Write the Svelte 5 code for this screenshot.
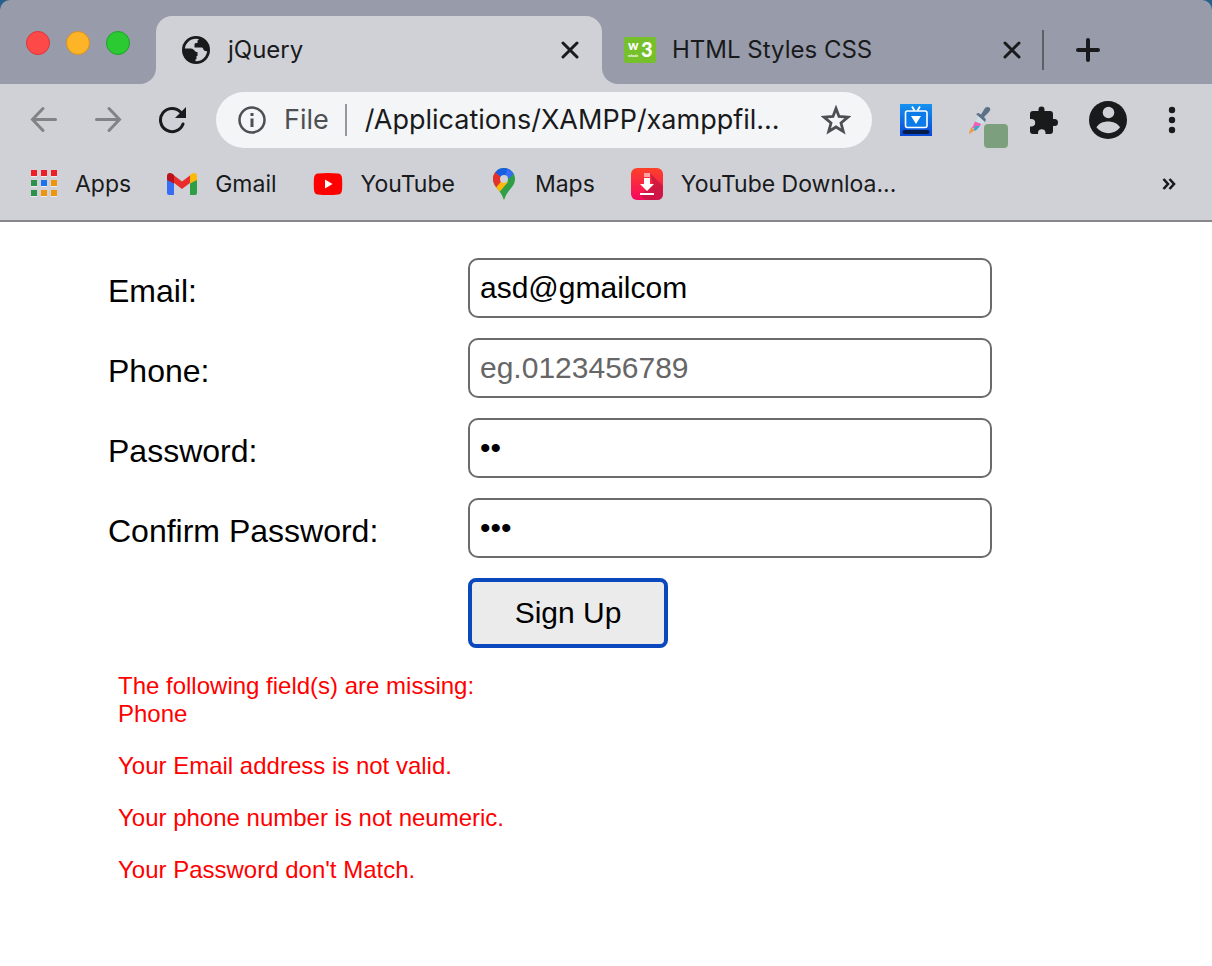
<script>
  let email = $state('asd@gmailcom');
  let phone = $state('');
  let password = $state('ab');
  let confirm = $state('abc');
  const messages = [
    'Your Email address is not valid.',
    'Your phone number is not neumeric.',
    "Your Password don't Match."
  ];
</script>

<div class="window">
  <header>
    <div class="tabs">
      <div class="lights">
        <button class="light red" aria-label="Close window"></button>
        <button class="light amber" aria-label="Minimise window"></button>
        <button class="light green" aria-label="Zoom window"></button>
      </div>
      <div class="tab-back">
        <div class="tab">
          <svg width="28" height="28" viewBox="0 0 28 28">
            <circle cx="14" cy="14" r="12.6" fill="none" stroke="#191a1c" stroke-width="2.800" />
            <path d="M1.500 12.500H9Q11 12.500 12.500 14.500L14 16H15.500V20H14.500V22.500Q14.500 23.500 13.500 23.500V26.500L9 26Q2 22 1.500 12.500ZM17 1.500L22 4 26 10V15Q24 15.500 22 14.500L21 12.500Q21 11.500 19.500 11.500H12.500V8.500Q12.500 7 14 7H15.500V5Q15.500 4 16.500 4Z" fill="#191a1c" />
          </svg>
          <span class="title">jQuery</span>
          <button class="plain" aria-label="Close tab">
            <svg width="18" height="18" viewBox="0 0 18 18"><path d="M2 2 16 16M16 2 2 16" stroke="#191a1c" stroke-width="3" stroke-linecap="round" /></svg>
          </button>
        </div>
      </div>
      <div class="rest">
        <div class="tab second">
          <svg width="32" height="26" viewBox="0 0 32 26">
            <rect width="32" height="26" rx="2" fill="#76c02c" />
            <g fill="#fff" font-family="Lato, sans-serif" font-weight="900">
              <text x="4" y="13" font-size="13">w</text>
              <text x="17" y="20" font-size="20">3</text>
              <text x="4" y="20" font-size="3">schools</text>
            </g>
          </svg>
          <span class="title">HTML Styles CSS</span>
          <button class="plain" aria-label="Close tab">
            <svg width="18" height="18" viewBox="0 0 18 18"><path d="M2 2 16 16M16 2 2 16" stroke="#191a1c" stroke-width="3" stroke-linecap="round" /></svg>
          </button>
        </div>
        <span class="rule"></span>
        <button class="plain" aria-label="New tab">
          <svg width="24" height="24" viewBox="0 0 24 24"><path d="M2 12H22M12 2V22" stroke="#191a1c" stroke-width="4" stroke-linecap="round" /></svg>
        </button>
      </div>
    </div>

    <div class="toolbar">
      <nav>
        <button class="plain" aria-label="Back">
          <svg width="28" height="28" viewBox="0 0 28 28" fill="none" stroke="#828386" stroke-width="3" stroke-linecap="round"><path d="M25.500 13.500H3M13 2.500 2.500 13.500 13 24.500" /></svg>
        </button>
        <button class="plain" aria-label="Forward">
          <svg width="28" height="28" viewBox="0 0 28 28" fill="none" stroke="#828386" stroke-width="3" stroke-linecap="round"><path d="M2.500 13.500H25.500M15 2.500 25.500 13.500 15 24.500" /></svg>
        </button>
        <button class="plain" aria-label="Reload">
          <svg width="28" height="28" viewBox="0 0 28 28"><path d="M25 18A11.600 11.600 0 1 1 22.500 6" fill="none" stroke="#191a1c" stroke-width="3" stroke-linecap="round" /><path d="M28 1V12H17Z" fill="#191a1c" /></svg>
        </button>
      </nav>
      <div class="address">
        <svg width="28" height="28" viewBox="0 0 28 28"><circle cx="14" cy="14" r="12.500" fill="none" stroke="#4e4f52" stroke-width="2.500" /><path d="M14 12.500V21M14 7V10" stroke="#4e4f52" stroke-width="3" /></svg>
        <span class="scheme">File</span>
        <input class="url" aria-label="Address" value="/Applications/XAMPP/xamppfil..." />
        <button class="plain" aria-label="Bookmark this page">
          <svg width="30" height="30" viewBox="0 0 30 30"><path d="M15 3.500 18 11.500 27 12.200 20 18 22.300 26.500 15 22 7.700 26.500 10 18 3 12.200 12 11.500Z" fill="none" stroke="#4e4f52" stroke-width="2.800" /></svg>
        </button>
      </div>
      <div class="actions">
        <button class="plain" aria-label="Video downloader">
          <svg width="32" height="32" viewBox="0 0 32 32">
            <defs><linearGradient id="tv" x2="0" y2="1"><stop stop-color="#1592f0" /><stop offset="1" stop-color="#0948d7" /></linearGradient></defs>
            <path d="M0 0H32V32H0Z" fill="url(#tv)" />
            <path d="M12 2.500 14.500 6.500M20 2.500 17.500 6.500" stroke="#fff" stroke-width="1.800" />
            <rect x="5.500" y="7" width="21.500" height="16.500" rx="2" fill="#0c7bea" stroke="#fff" stroke-width="1.600" />
            <path d="M11 12H21L16 20Z" fill="#fff" />
            <rect x="2.500" y="26" width="27" height="4" rx="2" fill="#071c48" />
          </svg>
        </button>
        <button class="plain" aria-label="Colour picker">
          <svg width="40" height="44" viewBox="0 0 40 44">
            <path d="M11.500 11.500 17 17 8 26.500 1.500 29.500 4 22Z" fill="#cfdfe8" />
            <path d="M7 17.500 13.500 20 9 25 4 24Z" fill="#ee62b3" /><path d="M7.500 22 12 22 8 26.500 5 27Z" fill="#35a9d2" /><path d="M3.500 23 6.500 26.500 1.500 30 1 28.500Z" fill="#f09a45" />
            <path d="M8 10 10.500 9 13 10.500 17 4Q19.500 2 22 4Q23 6.500 21 8L16 13 18 15.500 17 18Z" fill="#5b7188" />
            <rect x="16" y="20" width="24" height="24" rx="4" fill="#7ca07d" />
          </svg>
        </button>
        <button class="plain" aria-label="Extensions">
          <svg width="28" height="28" viewBox="0 0 28 28"><path d="M3 5H8.500V3.500A3 3 0 0 1 14.500 3.500V5H20Q23 5 23 8V13H24.500A3.500 3.500 0 0 1 24.500 20H23V25Q23 28 20 28H15.500V26.500A3.800 3.800 0 0 0 8 26.500V28H3Q0 28 0 25V20.500H2A3.800 3.800 0 0 0 2 13H0V8Q0 5 3 5Z" fill="#191a1c" /></svg>
        </button>
        <button class="plain" aria-label="Profile">
          <svg width="38" height="38" viewBox="0 0 38 38"><circle cx="19" cy="19" r="19" fill="#191a1c" /><circle cx="19.500" cy="11.500" r="5.800" fill="#d0d1d6" /><path d="M7.500 26.500C11 18.500 27 18.500 31 26.500C25 34 14 34 7.500 26.500Z" fill="#d0d1d6" /></svg>
        </button>
        <button class="plain" aria-label="Menu">
          <svg width="8" height="28" viewBox="0 0 8 28" fill="#191a1c"><circle cx="4" cy="4" r="3.200" /><circle cx="4" cy="14" r="3.200" /><circle cx="4" cy="24" r="3.200" /></svg>
        </button>
      </div>
    </div>

    <nav class="bookmarks">
      <a href="#apps">
        <svg width="26" height="28" viewBox="0 0 26 28">
          <path d="M0 6.500H6M10 6.500H16M20 6.500H26M0 16.500H6M10 16.500H16M20 16.500H26M0 26.500H6M10 26.500H16M20 26.500H26" stroke="#ececef" />
          <path d="M0 0H6V6H0ZM10 0H16V6H10ZM20 0H26V6H20Z" fill="#ef1d25" />
          <path d="M0 10H6V16H0ZM0 20H6V26H0Z" fill="#2b924b" />
          <path d="M10 10H16V16H10Z" fill="#1b73ee" />
          <path d="M20 10H26V16H20ZM10 20H16V26H10ZM20 20H26V26H20Z" fill="#ee9509" />
        </svg>
        Apps
      </a>
      <a href="#gmail">
        <svg width="30" height="22" viewBox="0 0 30 22">
          <path d="M0 5 7 9V22H2Q0 22 0 20Z" fill="#376df2" /><path d="M23 9 30 5V20Q30 22 28 22H23Z" fill="#2e9e47" />
          <path d="M6.500 2 15 8.500 23.500 2V9.500L15 16 6.500 9.500Z" fill="#e92d2a" />
          <path d="M0 7V3Q0 0 3 0Q5 0 7 2V10.500Z" fill="#b9121b" /><path d="M30 7V3Q30 0 27 0Q25 0 23 2V10.500Z" fill="#fcb90b" />
        </svg>
        Gmail
      </a>
      <a href="#youtube">
        <svg width="30" height="22" viewBox="0 0 30 22"><path d="M5 .5Q15 -.5 25 .5Q28.500 .5 29 5Q29.500 11 29 17Q28.500 21.500 25 21.500Q15 22.500 5 21.500Q1.500 21.500 1 17Q.5 11 1 5Q1.500 .5 5 .5Z" fill="#fe0000" /><path d="M12 6.500V15.500L19.500 11Z" fill="#fff" /></svg>
        YouTube
      </a>
      <a href="#maps">
        <svg width="26" height="32" viewBox="0 0 26 32">
          <defs><clipPath id="pin"><path d="M13 0A11 11 0 0 1 24 11C24 19 16 22 13.500 31Q13 32 12.500 31C10 22 2 19 2 11A11 11 0 0 1 13 0Z" /></clipPath></defs>
          <g clip-path="url(#pin)">
            <path d="M0 0H26V32H0Z" fill="#2e9e47" /><path d="M1 20 13 10 17 14 6 27Z" fill="#fcb90b" /><path d="M0 0 13 10 3 22H0Z" fill="#e4312b" /><path d="M4 4 12 11 21 0H4Z" fill="#195de0" /><path d="M17 0 13 10 15 13 26 3V0Z" fill="#376df2" />
          </g>
          <circle cx="13" cy="11" r="4" fill="#d0d1d6" />
        </svg>
        Maps
      </a>
      <a href="#downloader">
        <svg width="32" height="32" viewBox="0 0 32 32">
          <defs><linearGradient id="dl" x2="0" y2="1"><stop stop-color="#fd4229" /><stop offset="1" stop-color="#f70760" /></linearGradient></defs>
          <rect width="32" height="32" rx="6" fill="url(#dl)" />
          <path d="M19 5 32 18V26Q32 32 26 32H14L9 27 22 17Z" fill="#bd173e" opacity=".7" />
          <path d="M13 10H19V16H23L16 23 9 16H13ZM9 25H23V27H9Z" fill="#fff" /><path d="M13 5H19V9H13Z" fill="#fff" opacity=".55" />
        </svg>
        YouTube Downloa...
      </a>
      <button class="plain more" aria-label="More bookmarks">
        <svg width="14" height="12" viewBox="0 0 14 12" fill="none" stroke="#191a1c" stroke-width="2.600"><path d="M1.500 1 6 6 1.500 11M7.500 1 12 6 7.500 11" /></svg>
      </button>
    </nav>
  </header>

  <main>
    <form onsubmit={(e) => e.preventDefault()}>
      <label for="email">Email:</label>
      <input id="email" type="text" bind:value={email} />
      <label for="phone">Phone:</label>
      <input id="phone" type="text" placeholder="eg.0123456789" bind:value={phone} />
      <label for="password">Password:</label>
      <input id="password" type="password" bind:value={password} />
      <label for="confirm">Confirm Password:</label>
      <input id="confirm" type="password" bind:value={confirm} />
      <button class="submit" type="submit">Sign Up</button>
    </form>
    <div class="errors">
      <p>The following field(s) are missing:<br />Phone</p>
      {#each messages as message}
        <p>{message}</p>
      {/each}
    </div>
  </main>
</div>

<style>
  :global(body) { margin: 0; background: #fff; }
  .window { font-family: "Liberation Sans", Arial, sans-serif; color: #000; }
  * { box-sizing: border-box; }
  svg { display: block; flex: none; }
  header {
    background: #d0d1d6;
    border-bottom: 2px solid #87878c;
    font-family: Inter, sans-serif;
    color: #191a1c;
  }
  .plain { border: 0; padding: 0; background: none; display: block; flex: none; }
  .tabs {
    display: flex;
    height: 84px;
    background: linear-gradient(#28608c 16px, #d0d1d6 16px);
  }
  .lights {
    display: flex;
    gap: 16px;
    width: 156px;
    padding: 31px 26px;
    background: #989ba9;
    border-radius: 10px 0 16px 0;
  }
  .light { width: 24px; height: 24px; padding: 0; border-radius: 50%; border: 1px solid; }
  .red { background: #fd4a48; border-color: #dc3538; }
  .amber { background: #fdb427; border-color: #da9020; }
  .green { background: #2bc932; border-color: #1da326; }
  .tab-back { width: 446px; background: #989ba9; padding-top: 16px; }
  .tab { display: flex; align-items: center; height: 68px; padding: 0 23px 0 26px; background: #d0d1d6; border-radius: 16px 16px 0 0; }
  .title { flex: 1; margin-left: 18px; font-size: 24px; line-height: 32px; white-space: nowrap; }
  .rest { display: flex; flex: 1; align-items: center; padding-top: 16px; background: #989ba9; border-radius: 0 10px 0 16px; }
  .second { width: 440px; padding: 0 21px 0 22px; background: none; }
  .second .title { margin-left: 16px; }
  .rule { width: 2px; height: 40px; margin-right: 32px; background: #5d5f68; }
  .toolbar { display: flex; align-items: center; height: 72px; padding-right: 36px; }
  .toolbar nav { display: flex; gap: 36px; padding: 0 30px; }
  .address { display: flex; flex: 1; align-items: center; min-width: 0; height: 56px; padding: 0 21px 0 22px; border-radius: 28px; background: #f4f5f7; font-size: 27px; }
  .scheme { margin-left: 18px; padding-right: 16px; border-right: 2px solid #97989b; line-height: 32px; color: #4e4f52; }
  .url { flex: 1; min-width: 0; height: 40px; padding: 0 0 0 18px; border: 0; background: none; font: 27px/40px Inter, sans-serif; color: #191a1c; text-overflow: ellipsis; }
  .actions { display: flex; align-items: center; margin-left: 28px; }
  .actions button:nth-child(2) { margin: 20px 22px 8px 36px; }
  .actions button:nth-child(4) { margin: 0 41px 0 31px; }
  .bookmarks { display: flex; align-items: center; gap: 36px; height: 64px; padding: 0 36px 8px 31px; font-size: 23px; line-height: 32px; }
  .bookmarks a { display: flex; align-items: center; gap: 18px; color: inherit; text-decoration: none; white-space: nowrap; }
  .more { margin-left: auto; }
  main { padding: 36px 108px; }
  form { display: grid; grid-template-columns: 360px minmax(0, 524px); row-gap: 20px; }
  label { font-size: 32px; line-height: 36px; padding-top: 15px; }
  form input { width: 100%; height: 60px; padding: 0 10px; border: 2px solid #6b6b6b; border-radius: 10px; font: 30px "Liberation Sans", Arial, sans-serif; color: #000; background: #fff; }
  input::placeholder { color: #666; opacity: 1; }
  .submit { grid-column: 2; width: 200px; height: 70px; border: 4px solid #0a48bd; border-radius: 8px; background: #ebebeb; font: 30px "Liberation Sans", Arial, sans-serif; color: #000; }
  .errors { padding: 24px 10px 0; color: #f00; font-size: 24px; line-height: 28px; }
  p { margin: 0 0 24px; }
</style>
